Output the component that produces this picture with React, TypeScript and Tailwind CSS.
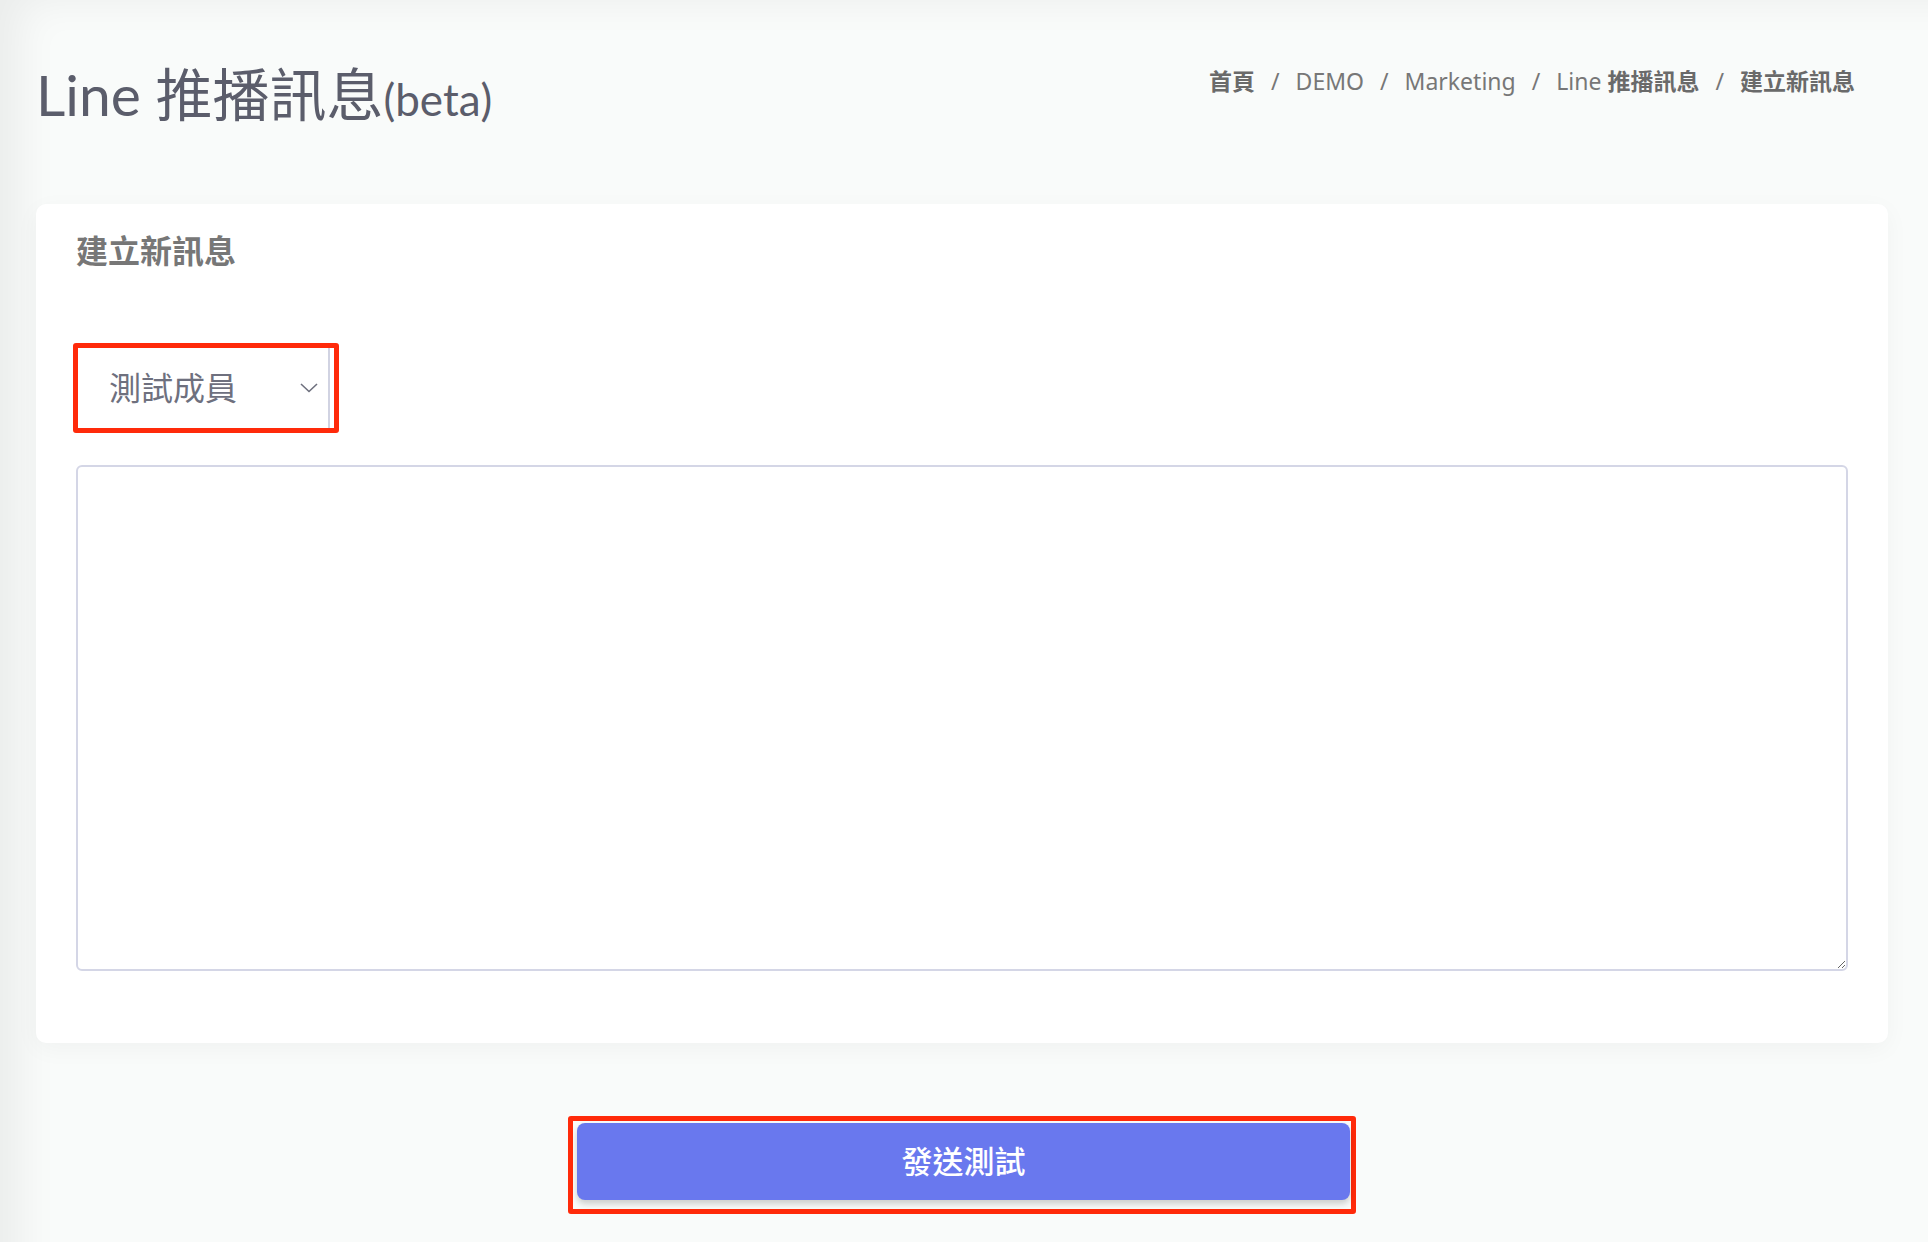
import React from 'react';

const crumbs = [
  { label: '首頁', bold: true },
  { label: 'DEMO', bold: false },
  { label: 'Marketing', bold: false },
  { label: 'Line', cjk: '推播訊息', bold: false },
  { label: '建立新訊息', bold: true },
];

const font = "font-['Noto_Sans','Noto_Sans_CJK_TC',sans-serif]";

export default function App() {
  return (
    <div
      className={`min-h-[1242px] w-full bg-[#f9fbfa] pb-[28px] pl-[36px] pr-[40px] shadow-[inset_44px_24px_40px_-24px_rgba(0,0,0,0.06)] ${font}`}
    >
      {/* Page header */}
      <div className="flex h-[204px] items-start justify-between">
        <h1 className="pt-[66px] font-['Lato','Noto_Sans_CJK_TC',sans-serif] text-[57px] font-normal leading-none text-[#5b5d6b]">
          Line 推播訊息<span className="text-[44px]">(beta)</span>
        </h1>
        <nav className="flex items-center pr-[33px] pt-[70px] text-[23px] leading-none text-[#777]">
          {crumbs.map((c, i) => (
            <div key={i} className="flex items-center">
              {i > 0 && <span className="mx-[16px] text-[#777]">/</span>}
              <span className={c.bold ? 'font-bold text-[#6a6a6a]' : 'font-normal'}>{c.label}</span>
              {c.cjk && <span className="ml-[6px] font-semibold text-[#6a6a6a]">{c.cjk}</span>}
            </div>
          ))}
        </nav>
      </div>

      {/* Card */}
      <div className="rounded-[10px] bg-white px-[40px] pb-[72px] pt-[31px] shadow-[0_6px_24px_rgba(0,0,0,0.04)]">
        <h4 className="text-[32px] font-bold leading-none text-[#777]">建立新訊息</h4>

        <div className="-ml-[3px] mt-[76px] h-[90px] w-[266px] rounded-[3px] border-[5px] border-[#ff2a0a]">
          <div className="flex h-full w-[252px] items-center justify-between border-r-2 border-[#d1d3e2] pl-[31px] pr-[8px]">
            <span className="text-[32px] leading-none text-[#6e707e]">測試成員</span>
            <svg width="18" height="10" viewBox="0 0 18 10" fill="none" className="mr-[2px]">
              <polyline points="1,1 9,8.5 17,1" stroke="#6e707e" strokeWidth="1.6" fill="none" />
            </svg>
          </div>
        </div>

        <textarea className="mt-[32px] block h-[506px] w-full rounded-[6px] border-2 border-[#d4d6e6] bg-white p-3 text-[20px] text-[#6e707e] outline-none" />
      </div>

      {/* Submit */}
      <div className="mt-[73px] flex justify-center">
        <div className="h-[98px] w-[788px] rounded-[3px] border-[5px] border-[#ff2a0a] pb-[9px] pl-[4px] pr-[1px] pt-[2px]">
          <button className="flex h-full w-full items-center justify-center rounded-[8px] bg-[#6978ee] text-[31px] font-medium leading-none text-white shadow-[0_4px_6px_rgba(0,0,0,0.18)]">
            發送測試
          </button>
        </div>
      </div>
    </div>
  );
}
